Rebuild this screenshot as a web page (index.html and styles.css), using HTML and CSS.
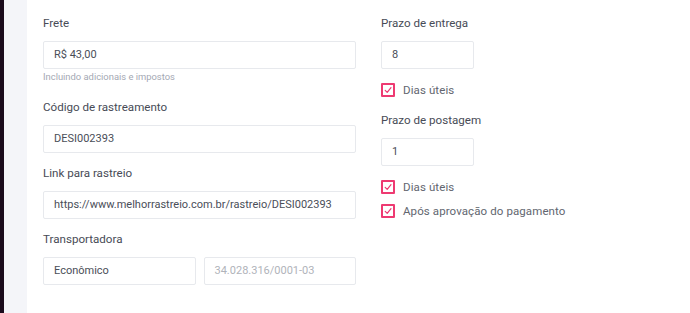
FILE: index.html
```html
<!DOCTYPE html>
<html lang="pt-BR">
<head>
<meta charset="utf-8">
<link rel="stylesheet" href="styles.css">
</head>
<body>
<div class="app">
  <div class="rail"></div>
  <div class="strip"></div>
  <main class="main">
    <div class="grid">
      <div class="col">
        <div class="field">
          <div class="label">Frete</div>
          <div class="input">R$ 43,00</div>
          <div class="help">Incluindo adicionais e impostos</div>
        </div>
        <div class="field">
          <div class="label">Código de rastreamento</div>
          <div class="input">DESI002393</div>
        </div>
        <div class="field">
          <div class="label">Link para rastreio</div>
          <div class="input">https://www.melhorrastreio.com.br/rastreio/DESI002393</div>
        </div>
        <div class="field">
          <div class="label">Transportadora</div>
          <div class="pair">
            <div class="input">Econômico</div>
            <div class="input muted">34.028.316/0001-03</div>
          </div>
        </div>
      </div>
      <div class="col">
        <div class="field">
          <div class="label">Prazo de entrega</div>
          <div class="input small">8</div>
          <div class="checks">
            <label class="check"><span class="box"><svg viewBox="0 0 10 10"><path d="M2.2 5.4 L4.2 7.4 L8 2.6"/></svg></span>Dias úteis</label>
          </div>
        </div>
        <div class="field">
          <div class="label">Prazo de postagem</div>
          <div class="input small">1</div>
          <div class="checks">
            <label class="check"><span class="box"><svg viewBox="0 0 10 10"><path d="M2.2 5.4 L4.2 7.4 L8 2.6"/></svg></span>Dias úteis</label>
            <label class="check"><span class="box"><svg viewBox="0 0 10 10"><path d="M2.2 5.4 L4.2 7.4 L8 2.6"/></svg></span>Após aprovação do pagamento</label>
          </div>
        </div>
      </div>
    </div>
  </main>
</div>
</body>
</html>
```
FILE: styles.css
```css
html, body {
  margin: 0;
  padding: 0;
  background: #ffffff;
}
body {
  font-family: Roboto, "Open Sans", sans-serif;
  font-size: 12px;
  color: #3e4350;
}
.app {
  display: flex;
  height: 313px;
}
.rail {
  width: 4px;
  background: #1a0b1c;
  flex: none;
}
.strip {
  width: 23px;
  background: #f4f5f9;
  flex: none;
}
.main {
  flex: 1;
  padding: 15px 16px 0 16px;
}
.grid {
  display: grid;
  grid-template-columns: 313px 1fr;
  column-gap: 25px;
}
.col {
  display: flex;
  flex-direction: column;
  gap: 12px;
}
.col + .col {
  gap: 15px;
}
.field {
  display: flex;
  flex-direction: column;
}
.label {
  height: 16px;
  line-height: 17px;
  margin-bottom: 10px;
  color: #474b56;
  font-size: 11.6px;
}
.input {
  box-sizing: border-box;
  height: 28px;
  line-height: 26px;
  border: 1px solid #e7e9ed;
  border-radius: 2px;
  padding: 0 10px;
  color: #4a4e58;
  font-size: 11px;
  white-space: nowrap;
  overflow: hidden;
}
.input.small {
  width: 93px;
}
.input.muted {
  color: #b0b3ba;
}
.help {
  margin-top: 2px;
  margin-bottom: 4px;
  height: 12px;
  line-height: 12px;
  font-size: 9.4px;
  color: #a4a8b3;
}
.pair {
  display: grid;
  grid-template-columns: 1fr 1fr;
  gap: 8px;
}
.checks {
  display: flex;
  flex-direction: column;
  gap: 10px;
  margin-top: 14px;
}
.check {
  display: flex;
  align-items: center;
  gap: 8px;
  height: 14px;
  color: #62666f;
  font-size: 11.5px;
  letter-spacing: 0.1px;
}
.box {
  box-sizing: border-box;
  width: 14px;
  height: 14px;
  border: 2px solid #ee3a72;
  border-radius: 1px;
  background: #fff;
  display: flex;
  align-items: center;
  justify-content: center;
  flex: none;
}
.box svg {
  width: 10px;
  height: 10px;
}
.box path {
  fill: none;
  stroke: #ee3a72;
  stroke-width: 1.2;
  stroke-linecap: round;
  stroke-linejoin: round;
}
```
